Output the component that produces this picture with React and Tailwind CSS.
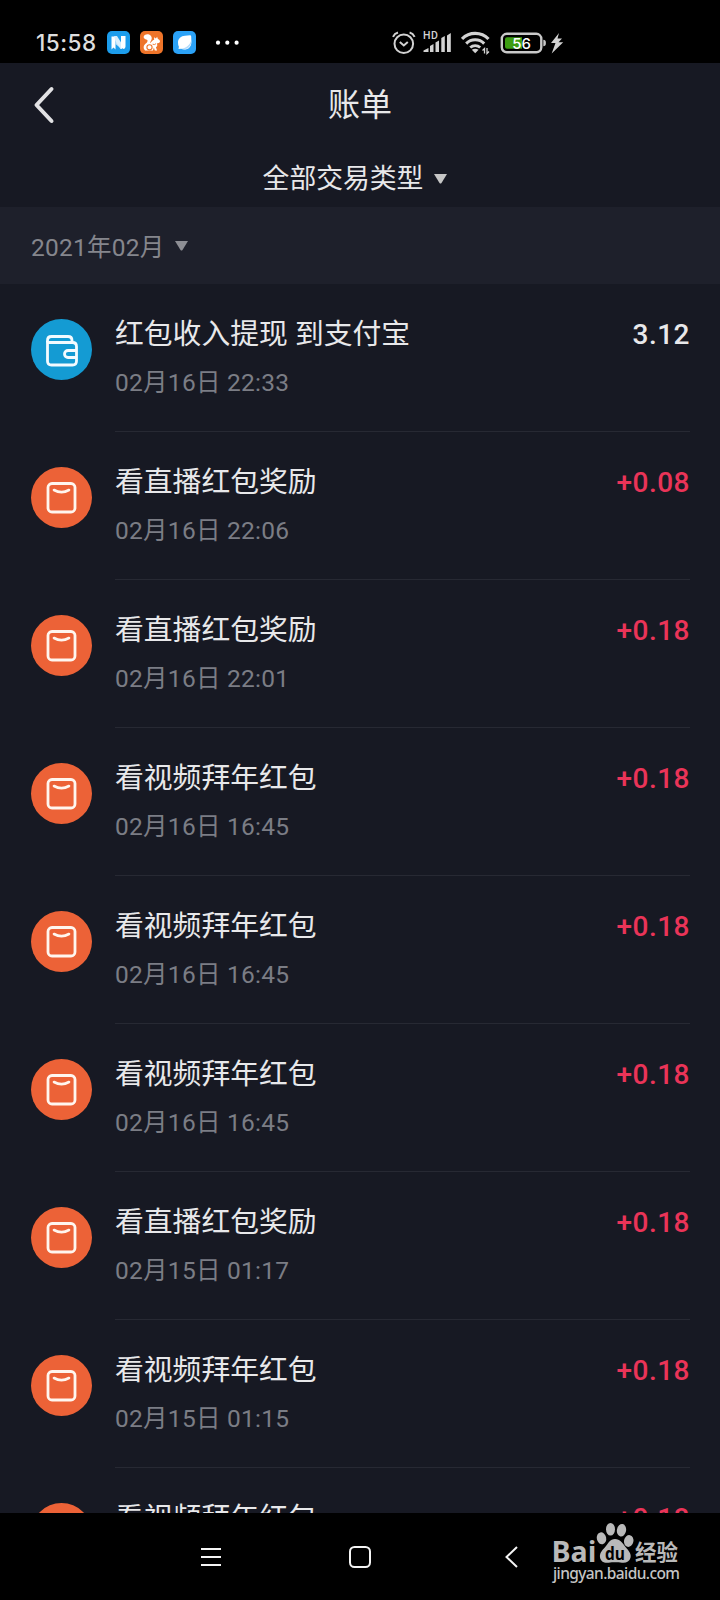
const transactions = [
  { id: 1, type: "withdraw", title: "红包收入提现 到支付宝", time: "02月16日 22:33", amount: "3.12" },
  { id: 2, type: "reward", title: "看直播红包奖励", time: "02月16日 22:06", amount: "+0.08" },
  { id: 3, type: "reward", title: "看直播红包奖励", time: "02月16日 22:01", amount: "+0.18" },
  { id: 4, type: "reward", title: "看视频拜年红包", time: "02月16日 16:45", amount: "+0.18" },
  { id: 5, type: "reward", title: "看视频拜年红包", time: "02月16日 16:45", amount: "+0.18" },
  { id: 6, type: "reward", title: "看视频拜年红包", time: "02月16日 16:45", amount: "+0.18" },
  { id: 7, type: "reward", title: "看直播红包奖励", time: "02月15日 01:17", amount: "+0.18" },
  { id: 8, type: "reward", title: "看视频拜年红包", time: "02月15日 01:15", amount: "+0.18" },
  { id: 9, type: "reward", title: "看视频拜年红包", time: "02月15日 01:13", amount: "+0.18" },
];

const App = () => {
  return (
    <div className="flex flex-col w-[720px] h-[1600px] overflow-hidden bg-[#171923] text-[#e8e8ea] font-[Roboto,'Noto_Sans_CJK_SC',sans-serif]">
      <StatusBar />
      <Header />
      <MonthBar />
      <ul className="flex-1 min-h-0 overflow-hidden">
        {transactions.map((item) => (
          <Transaction key={item.id} item={item} />
        ))}
      </ul>
      <NavBar />
    </div>
  );
};

const StatusBar = () => {
  return (
    <div className="h-[63px] shrink-0 bg-black pt-[31px] pl-[35px] flex flex-row items-start text-[#dedede]">
      <span className="w-[72px] pl-[1px] text-[22.5px] leading-[24px] tracking-[0.5px] font-medium font-[Inter,sans-serif]">
        15:58
      </span>
      <div className="flex flex-row gap-[10px]">
        <NewsIcon />
        <SquirrelIcon />
        <BubbleIcon />
      </div>
      <svg className="ml-[18px]" width="26" height="23" viewBox="0 0 26 23" fill="#fff">
        <circle cx="4" cy="11.7" r="2.1" />
        <circle cx="13.3" cy="11.7" r="2.1" />
        <circle cx="22.6" cy="11.7" r="2.1" />
      </svg>
      <div className="ml-[152px] flex flex-row">
        <AlarmIcon />
        <SignalIcon />
        <WifiIcon />
        <BatteryIcon />
      </div>
    </div>
  );
};

const NewsIcon = () => (
  <svg width="23" height="23" viewBox="0 0 23 23">
    <rect width="23" height="23" rx="5" fill="#1c9dec" />
    <path d="M4.5 5.5h4v13l-2-2-2 2z" fill="#fff" />
    <path d="M8.5 5.5l6 9v3.5L8.5 13z" fill="#b9e0fb" />
    <path d="M7 5h3l5 8v5h-1.5L8.5 10z" fill="#d9effd" />
    <path d="M14 5h4.5v10.5q0 2-2 2.5L14 16.5z" fill="#fff" />
  </svg>
);

const SquirrelIcon = () => (
  <svg width="23" height="23" viewBox="0 0 23 23">
    <rect width="23" height="23" rx="5" fill="#ee7429" />
    <path
      d="M5 19.5C3 17.5 3.2 14.5 5.5 12.8 7.5 11.3 8.2 9.8 7 8.8 5.8 8.3 4 8 3.6 6.2 3.6 4 6.5 2.6 9 3.4c3 1.1 3.3 4.1 2 6.3-.7 1.2-1 1.8-.8 2.6 1-1.6 2.3-3 4-3.6L14 6.2l1.9 1.2 1.2-1.7.8 2.2c1.6.5 2.4 1.8 2 3.2-.4 1-1.7 1.2-3.2 1.3 1 1.2.8 2.9-.8 3.9l1.2 3.2h-2.3l-.9-3-1 3z"
      fill="#fff"
    />
    <circle cx="9.5" cy="16.3" r="2.6" fill="none" stroke="#ee7429" strokeWidth="1.1" />
    <path d="M12.6 13.2q2 1 3.4-.5" fill="none" stroke="#ee7429" strokeWidth="0.9" />
  </svg>
);

const BubbleIcon = () => (
  <svg width="23" height="23" viewBox="0 0 23 23">
    <rect width="23" height="23" rx="5" fill="#2ba2f7" />
    <path d="M5 11.5C5 7.5 8 4.8 12 4.7l5-.5q1.2 0 1.2 1.2l.2 5c.3 5-3 8.2-7.2 8.2q-1.700 0-3-.8L5.5 18l.4-2.3Q5 14 5 11.5z" fill="#fff" />
    <path d="M8 17.6c4.500 0 9-3.500 10.200-8.400.6 5-2.700 8.900-7.200 8.900q-1.700 0-3-.5z" fill="#b5dcfb" />
  </svg>
);

const AlarmIcon = () => (
  <svg width="24" height="24" viewBox="0 0 24 24" fill="none" stroke="#d2d2d2" strokeWidth="2">
    <circle cx="11.8" cy="12.8" r="9.3" />
    <path d="M7.8 11l4 3.5 4-3.5" />
    <path d="M1 5.8q1.5-3.3 5-4.3M22.6 5.8q-1.5-3.3-5-4.3" />
  </svg>
);

const SignalIcon = () => (
  <svg className="ml-[7px] overflow-visible" width="29" height="24" viewBox="0 0 29 24" fill="#d2d2d2">
    <text x="0" y="8.3" fontSize="10.5" fontWeight="500" letterSpacing="0.5" fontFamily="Roboto, sans-serif">
      HD
    </text>
    <path d="M0.5 21v-1.500l5-2.500v4zM7 21v-6l3.500-2v8zM12.5 21V11.500l3.500-2V21zM18.300 21V7l3.500-2v16zM24 21V4.500L27.800 2v19z" />
  </svg>
);

const WifiIcon = () => (
  <svg className="ml-[9px]" width="30" height="24" viewBox="0 0 30 24" fill="none" stroke="#d2d2d2">
    <path d="M1 8a18.5 18.5 0 0 1 26.5 0" strokeWidth="3.2" />
    <path d="M5.2 12.6a12.6 12.6 0 0 1 18 0" strokeWidth="3" />
    <path d="M9.2 16.5a7.4 7.4 0 0 1 10 0" strokeWidth="2.8" />
    <path d="M10.8 18.7q3.4-2 6.8 0L14.2 22.3z" fill="#d2d2d2" stroke="none" />
    <path d="M23.5 22.5v-5l-2 2M26 17v5.5l2-2" strokeWidth="1.3" />
  </svg>
);

const BatteryIcon = () => (
  <svg className="ml-[9px]" width="64" height="24" viewBox="0 0 64 24">
    <rect x="1.8" y="2.8" width="39.5" height="18.5" rx="5" fill="none" stroke="#c9c9c9" strokeWidth="2.4" />
    <path d="M7 6.2H22v11.6H7a2 2 0 0 1-2-2V8.200a2 2 0 0 1 2-2z" fill="#3c9d12" />
    <text x="21.5" y="17.7" textAnchor="middle" fontSize="15" fontWeight="500" fill="#fff" fontFamily="Inter, sans-serif">
      56
    </text>
    <path d="M43.3 8.800q2.600 0 2.600 3.200t-2.600 3.200z" fill="#c9c9c9" />
    <path d="M59 2L51 12h4.500l-3.800 10.500L63.200 11.200h-4.700L62 7.500h-4.500z" fill="#d2d2d2" />
  </svg>
);

const Header = () => {
  return (
    <header className="h-[144px] shrink-0 flex flex-col">
      <div className="h-[84px] flex flex-row items-center justify-between px-[32px]">
        <svg width="24" height="38" viewBox="0 0 24 38" fill="none" stroke="#e2e2e4" strokeWidth="4" strokeLinecap="round" strokeLinejoin="round">
          <path d="M19.5 3L4.5 19l15 16" />
        </svg>
        <h1 className="text-[32px] leading-[40px]">账单</h1>
        <div className="w-6"></div>
      </div>
      <button className="h-[60px] pt-[3px] pr-[10px] flex flex-row items-center justify-center gap-[11px] text-[26.8px] leading-[36px]">
        全部交易类型
        <Caret color="#c6c6c6" />
      </button>
    </header>
  );
};

const Caret = ({ color }) => (
  <svg width="13" height="10" viewBox="0 0 13 10" fill={color}>
    <path d="M0 0h13L7.500 9q-1 1-2 0z" />
  </svg>
);

const MonthBar = () => {
  return (
    <div className="h-[77px] shrink-0 bg-[#1e202b] pl-[31px] flex flex-row items-center gap-[10px] text-[#85868d] text-[24.5px] tracking-[0.25px] leading-[32px]">
      <span className="pt-[5px]">2021年02月</span>
      <Caret color="#8d8e94" />
    </div>
  );
};

const Transaction = ({ item }) => {
  const isReward = item.type === "reward";

  return (
    <li className="h-[148px] pl-[30.5px] pr-[30px] flex flex-row">
      <div className="pt-[34.5px] w-[84.5px] shrink-0">
        {isReward ? <RewardIcon /> : <WalletIcon />}
      </div>
      <div className="flex-1 flex flex-row justify-between border-b border-[#272933] pt-[30px]">
        <div>
          <p className="text-[28.8px] leading-[40px]">{item.title}</p>
          <p className="mt-[13px] text-[24.5px] tracking-[0.27px] leading-[32px] text-[#7b7d85]">{item.time}</p>
        </div>
        <span
          className={`pt-[1px] text-[28px] leading-[40px] font-medium tracking-[0.5px] ${
            isReward ? "text-[#ea3458]" : "text-[#e8e8ea]"
          }`}
        >
          {item.amount}
        </span>
      </div>
    </li>
  );
};

const WalletIcon = () => (
  <svg width="61" height="61" viewBox="0 0 61 61" fill="none" stroke="#f3fbff" strokeWidth="2.8" strokeLinejoin="round">
    <circle cx="30.5" cy="30.5" r="30.5" fill="#149bd3" stroke="none" />
    <path d="M16.5 23.5v-2q0-4 4-4h16.5q4 0 4 4v2" />
    <path d="M16.5 22v20q0 4 4 4h21q4 0 4-4V27.5q0-4-4-4H16.5" />
    <path d="M45.5 31.5h-8.5a3.5 3.5 0 0 0 0 7h8.5" />
  </svg>
);

const RewardIcon = () => (
  <svg width="61" height="61" viewBox="0 0 61 61" fill="none" stroke="#fff6ef" strokeWidth="2.8" strokeLinecap="round">
    <circle cx="30.5" cy="30.5" r="30.5" fill="#ec6237" stroke="none" />
    <rect x="17" y="16.5" width="27" height="28.5" rx="4" />
    <path d="M23 23q7.5 4.2 15 0" strokeWidth="2.6" />
  </svg>
);

const NavBar = () => {
  return (
    <nav className="relative h-[87px] shrink-0 bg-black flex flex-row items-center pl-[201px]">
      <svg width="20" height="20" viewBox="0 0 20 20" stroke="#f4f4f4" strokeWidth="2">
        <path d="M0 2h20M0 10h20M0 18h20" />
      </svg>
      <svg className="ml-[128px]" width="22" height="22" viewBox="0 0 22 22" fill="none" stroke="#f4f4f4" strokeWidth="2">
        <rect x="1" y="1" width="20" height="20" rx="4.5" />
      </svg>
      <svg className="ml-[134px]" width="14" height="22" viewBox="0 0 14 22" fill="none" stroke="#f4f4f4" strokeWidth="2">
        <path d="M12 1L1.5 11 12 21" />
      </svg>
      <Watermark />
    </nav>
  );
};

const Watermark = () => (
  <svg className="absolute left-[550px] top-[8px]" width="134" height="66" viewBox="0 0 134 66" fill="#b9b9b9">
    <text x="1.5" y="41" fontSize="28" fontWeight="700" textLength="45" lengthAdjust="spacingAndGlyphs" fontFamily="'Open Sans', sans-serif">
      Bai
    </text>
    <ellipse cx="51.5" cy="17.3" rx="4.7" ry="6" transform="rotate(-12 51.5 17.3)" />
    <ellipse cx="60.5" cy="8.3" rx="4.5" ry="6.3" />
    <ellipse cx="71.5" cy="9.3" rx="4.6" ry="6.3" transform="rotate(10 71.5 9.3)" />
    <ellipse cx="78.7" cy="20" rx="4.7" ry="6" transform="rotate(12 78.7 20)" />
    <path d="M65 18c5 0 7.5 4 10.5 8 3.500 4 6 7 5 10.700-1 4-4.500 5.500-8.500 5-4.500-.6-9-.6-13.500 0-4.500.6-8-1.500-8.500-5.500-.5-4 2-7 5-10 3.500-4 5-8.200 10-8.200z" />
    <text x="65" y="39" textAnchor="middle" fontSize="18" fontWeight="700" fill="#000" textLength="20" lengthAdjust="spacingAndGlyphs" fontFamily="'Open Sans', sans-serif">
      du
    </text>
    <text x="85" y="38.5" fontSize="22" fontWeight="700" textLength="43" lengthAdjust="spacingAndGlyphs" fontFamily="'Noto Sans CJK SC', sans-serif">
      经验
    </text>
    <text x="3" y="58" fontSize="15.5" fontWeight="500" fill="#c4c4c4" textLength="127" fontFamily="'Noto Sans', sans-serif">
      jingyan.baidu.com
    </text>
  </svg>
);

export default App;
